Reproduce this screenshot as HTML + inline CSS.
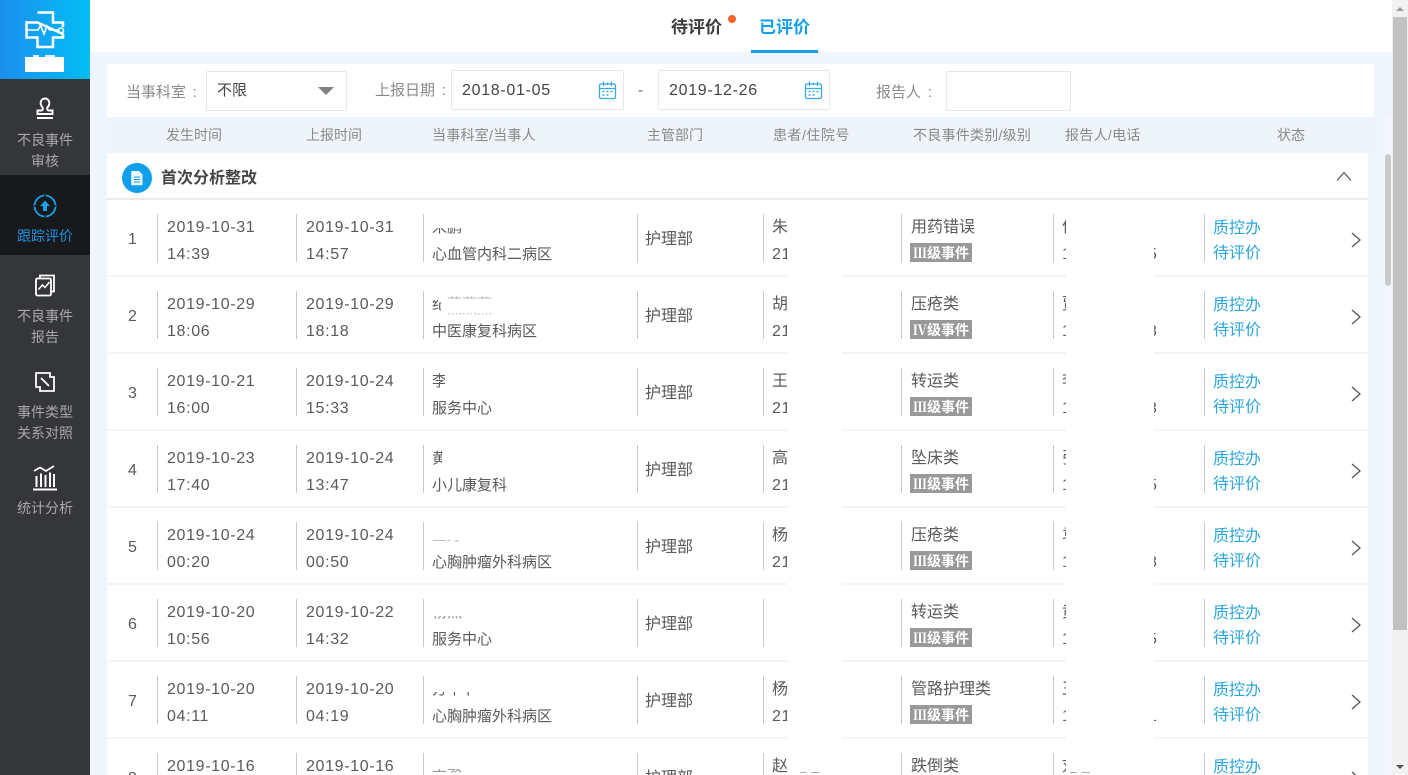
<!DOCTYPE html>
<html><head><meta charset="utf-8"><style>
*{box-sizing:border-box}
html,body{margin:0;padding:0;width:1408px;height:775px;overflow:hidden;background:#f0f4fb;font-family:"Liberation Sans","Noto Sans CJK SC",sans-serif;color:#555}
#wrap{position:relative;width:1408px;height:775px;overflow:hidden;background:#f0f4fb}
.a{position:absolute;white-space:nowrap}
#side{left:0;top:0;width:90px;height:775px;background:#34363a}
.n{position:absolute;left:0;width:90px;text-align:center;font-size:14px;line-height:21px;color:#a8a8a8}
.box{position:absolute;background:#fff;border:1px solid #e4e6ea;border-radius:2px}
.lb{font-size:15px;color:#8a8a8a;line-height:20px;word-spacing:2.500px}
.dt{font-size:16px;color:#444;letter-spacing:.7px;line-height:20px}
.h{font-size:14px;color:#8a8a8a;line-height:20px;top:125px}
.r{position:absolute;left:107px;width:1261px;height:77px;border-bottom:2px solid #f4f4f2;
background:
linear-gradient(#c8c8c8,#c8c8c8) 50px 14px/1px 48px no-repeat,
linear-gradient(#c8c8c8,#c8c8c8) 189px 14px/1px 48px no-repeat,
linear-gradient(#c8c8c8,#c8c8c8) 316px 14px/1px 48px no-repeat,
linear-gradient(#c8c8c8,#c8c8c8) 530px 14px/1px 48px no-repeat,
linear-gradient(#c8c8c8,#c8c8c8) 656px 14px/1px 48px no-repeat,
linear-gradient(#c8c8c8,#c8c8c8) 794px 14px/1px 48px no-repeat,
linear-gradient(#c8c8c8,#c8c8c8) 946px 14px/1px 48px no-repeat,
linear-gradient(#c8c8c8,#c8c8c8) 1097px 14px/1px 48px no-repeat,#fff}
.r span{position:absolute;white-space:nowrap;font-size:16px;line-height:20px;color:#5a5a5a}
.r .d{letter-spacing:.65px}
.r .t1{top:18px}.r .t2{top:45px}.r .m{top:30px}
.r .x1{left:60px}.r .x2{left:199px}.r .x3{left:325px;font-size:15px}.r .x4{left:538px}.r .x5{left:665px}.r .x6{left:804px}.r .x7{left:955px}.r .x8{left:1041px}.r .x9{left:1106px;color:#2ba6dd}
.r .t1.x9{top:19px}.r .t2.x9{top:44px}
.r .no{left:21px;top:30px}
.r .tag{left:803px;top:43px;width:62px;height:19px;background:#999;color:#fff;font-family:"Noto Sans CJK SC",sans-serif;font-size:14px;font-weight:bold;line-height:20px;text-align:center;overflow:hidden}
.r .tag i{font-style:normal;font-family:"Noto Serif CJK SC",serif}
.r svg{position:absolute;left:1243px;top:32px}
.cover{position:absolute;background:#fff;top:210px;height:565px}
</style></head><body><div id="wrap">

<div class="a" style="left:90px;top:0;width:1302px;height:52px;background:#fff"></div>
<div class="a" style="left:671px;top:17px;font-size:17px;font-weight:bold;color:#3c3c3c;line-height:22px">待评价</div>
<div class="a" style="left:728px;top:15px;width:8px;height:8px;border-radius:50%;background:#f5622a"></div>
<div class="a" style="left:759px;top:17px;font-size:17px;font-weight:bold;color:#12a0ea;line-height:22px">已评价</div>
<div class="a" style="left:751px;top:50px;width:67px;height:3px;background:#12a0ea"></div>

<div class="a" style="left:107px;top:64px;width:1267px;height:53px;background:#fff"></div>
<div class="a lb" style="left:126px;top:83px">当事科室 :</div>
<div class="box" style="left:206px;top:71px;width:141px;height:40px"></div>
<div class="a" style="left:217px;top:81px;font-size:15px;color:#444;line-height:20px">不限</div>
<div class="a" style="left:318px;top:87px;width:0;height:0;border-left:8px solid transparent;border-right:8px solid transparent;border-top:8px solid #808080"></div>
<div class="a lb" style="left:375px;top:81px">上报日期 :</div>
<div class="box" style="left:451px;top:70px;width:173px;height:40px"></div>
<div class="a dt" style="left:462px;top:81px">2018-01-05</div>
<svg class="a" style="left:598px;top:80px" width="19" height="20" viewBox="0 0 19 20" fill="none" stroke="#3aa9e0" stroke-width="1.300"><rect x="1.500" y="4" width="16" height="14.500" rx="1.500"/><path d="M1.500 8.500H17.500M5.500 1.500V6M9.500 2.500V5M13.500 1.500V6"/><path d="M4.500 11.500h2M8.500 11.500h2M12.500 11.500h2M4.500 15h2M8.500 15h2" stroke-width="1.600"/></svg>
<div class="a" style="left:638px;top:81px;font-size:15px;color:#666;line-height:20px">-</div>
<div class="box" style="left:658px;top:70px;width:172px;height:40px"></div>
<div class="a dt" style="left:669px;top:81px">2019-12-26</div>
<svg class="a" style="left:804px;top:80px" width="19" height="20" viewBox="0 0 19 20" fill="none" stroke="#3aa9e0" stroke-width="1.300"><rect x="1.500" y="4" width="16" height="14.500" rx="1.500"/><path d="M1.500 8.500H17.500M5.500 1.500V6M9.500 2.500V5M13.500 1.500V6"/><path d="M4.500 11.500h2M8.500 11.500h2M12.500 11.500h2M4.500 15h2M8.500 15h2" stroke-width="1.600"/></svg>
<div class="a lb" style="left:876px;top:83px">报告人 :</div>
<div class="box" style="left:946px;top:71px;width:125px;height:40px"></div>

<div class="a" style="left:107px;top:117px;width:1267px;height:36px;background:#eff3fa"></div>
<div class="a h" style="left:166px">发生时间</div>
<div class="a h" style="left:306px">上报时间</div>
<div class="a h" style="left:432px;letter-spacing:.25px">当事科室/当事人</div>
<div class="a h" style="left:647px">主管部门</div>
<div class="a h" style="left:773px;letter-spacing:.5px">患者/住院号</div>
<div class="a h" style="left:913px;letter-spacing:.25px">不良事件类别/级别</div>
<div class="a h" style="left:1065px;letter-spacing:.3px">报告人/电话</div>
<div class="a h" style="left:1277px">状态</div>

<div class="a" style="left:107px;top:153px;width:1261px;height:47px;background:#fff;border-bottom:2px solid #ecebe8"></div>
<div class="a" style="left:122px;top:163px;width:30px;height:30px;border-radius:50%;background:#12a0ec"></div>
<svg class="a" style="left:130px;top:170px" width="14" height="16" viewBox="0 0 14 16"><path d="M2 1H9L12.500 4.500V14.500a.8.8 0 0 1-.8.8H2a.8.8 0 0 1-.8-.8V1.800A.8.8 0 0 1 2 1Z" fill="#e8f6fd"/><path d="M4 7H10M4 9.500H10M4 12H10" stroke="#12a0ec" stroke-width="1"/></svg>
<div class="a" style="left:161px;top:168px;font-size:16px;font-weight:bold;color:#454545;line-height:22px">首次分析整改</div>
<svg class="a" style="left:1336px;top:170px" width="16" height="12" viewBox="0 0 16 12" fill="none" stroke="#555" stroke-width="1.200"><path d="M1 10.500L8 2.500L15 10.500"/></svg>

<div class="r" style="top:200px"><span class="no">1</span><span class="d t1 x1">2019-10-31</span><span class="d t2 x1">14:39</span><span class="d t1 x2">2019-10-31</span><span class="d t2 x2">14:57</span><span class="t1 x3" style="clip-path:inset(10px 0 0 0)">宋鹏</span><span class="t2 x3">心血管内科二病区</span><span class="m x4">护理部</span><span class="t1 x5">朱</span><span class="d t2 x5">21</span><span class="t1 x6">用药错误</span><span class="tag"><i>Ⅲ</i>级事件</span><span class="t1 x7">何</span><span class="d t2 x7">1</span><span class="d t2 x8">5</span><span class="t1 x9">质控办</span><span class="t2 x9">待评价</span><svg width="12" height="16" viewBox="0 0 12 16" fill="none" stroke="#555" stroke-width="1.300"><path d="M2 1L10 8L2 15"/></svg></div>

<div class="r" style="top:277px"><span class="no">2</span><span class="d t1 x1">2019-10-29</span><span class="d t2 x1">18:06</span><span class="d t1 x2">2019-10-29</span><span class="d t2 x2">18:18</span><span class="t1 x3" style="clip-path:inset(5px 6px 0 0)">纪</span><span class="t1" style="left:340px;font-size:15px;clip-path:inset(0 0 16px 0);color:#bbb">燕燕燕</span><span class="t1" style="left:340px;top:22px;font-size:15px;clip-path:inset(14px 0 0 0);color:#bbb">燕燕燕</span><span class="t2 x3">中医康复科病区</span><span class="m x4">护理部</span><span class="t1 x5">胡</span><span class="d t2 x5">21</span><span class="t1 x6">压疮类</span><span class="tag"><i>Ⅳ</i>级事件</span><span class="t1 x7">贾</span><span class="d t2 x7">1</span><span class="d t2 x8">8</span><span class="t1 x9">质控办</span><span class="t2 x9">待评价</span><svg width="12" height="16" viewBox="0 0 12 16" fill="none" stroke="#555" stroke-width="1.300"><path d="M2 1L10 8L2 15"/></svg></div>

<div class="r" style="top:354px"><span class="no">3</span><span class="d t1 x1">2019-10-21</span><span class="d t2 x1">16:00</span><span class="d t1 x2">2019-10-24</span><span class="d t2 x2">15:33</span><span class="t1 x3" style="width:13px;overflow:hidden">李</span><span class="t2 x3">服务中心</span><span class="m x4">护理部</span><span class="t1 x5">王</span><span class="d t2 x5">21</span><span class="t1 x6">转运类</span><span class="tag"><i>Ⅲ</i>级事件</span><span class="t1 x7">李</span><span class="d t2 x7">1</span><span class="d t2 x8">3</span><span class="t1 x9">质控办</span><span class="t2 x9">待评价</span><svg width="12" height="16" viewBox="0 0 12 16" fill="none" stroke="#555" stroke-width="1.300"><path d="M2 1L10 8L2 15"/></svg></div>

<div class="r" style="top:431px"><span class="no">4</span><span class="d t1 x1">2019-10-23</span><span class="d t2 x1">17:40</span><span class="d t1 x2">2019-10-24</span><span class="d t2 x2">13:47</span><span class="t1 x3" style="width:10px;overflow:hidden">黄</span><span class="t2 x3">小儿康复科</span><span class="m x4">护理部</span><span class="t1 x5">高</span><span class="d t2 x5">21</span><span class="t1 x6">坠床类</span><span class="tag"><i>Ⅲ</i>级事件</span><span class="t1 x7">张</span><span class="d t2 x7">1</span><span class="d t2 x8">5</span><span class="t1 x9">质控办</span><span class="t2 x9">待评价</span><svg width="12" height="16" viewBox="0 0 12 16" fill="none" stroke="#555" stroke-width="1.300"><path d="M2 1L10 8L2 15"/></svg></div>

<div class="r" style="top:508px"><span class="no">5</span><span class="d t1 x1">2019-10-24</span><span class="d t2 x1">00:20</span><span class="d t1 x2">2019-10-24</span><span class="d t2 x2">00:50</span><span class="t1 x3" style="color:#bbb;clip-path:inset(14px 0 3px 0)">王芳</span><span class="t2 x3">心胸肿瘤外科病区</span><span class="m x4">护理部</span><span class="t1 x5">杨</span><span class="d t2 x5">21</span><span class="t1 x6">压疮类</span><span class="tag"><i>Ⅲ</i>级事件</span><span class="t1 x7">袁</span><span class="d t2 x7">1</span><span class="d t2 x8">8</span><span class="t1 x9">质控办</span><span class="t2 x9">待评价</span><svg width="12" height="16" viewBox="0 0 12 16" fill="none" stroke="#555" stroke-width="1.300"><path d="M2 1L10 8L2 15"/></svg></div>

<div class="r" style="top:585px"><span class="no">6</span><span class="d t1 x1">2019-10-20</span><span class="d t2 x1">10:56</span><span class="d t1 x2">2019-10-22</span><span class="d t2 x2">14:32</span><span class="t1 x3" style="color:#888;clip-path:inset(13px 0 3px 0)">杨燕</span><span class="t2 x3">服务中心</span><span class="m x4">护理部</span><span class="t1 x6">转运类</span><span class="tag"><i>Ⅲ</i>级事件</span><span class="t1 x7">黄</span><span class="d t2 x7">1</span><span class="d t2 x8">5</span><span class="t1 x9">质控办</span><span class="t2 x9">待评价</span><svg width="12" height="16" viewBox="0 0 12 16" fill="none" stroke="#555" stroke-width="1.300"><path d="M2 1L10 8L2 15"/></svg></div>

<div class="r" style="top:662px"><span class="no">7</span><span class="d t1 x1">2019-10-20</span><span class="d t2 x1">04:11</span><span class="d t1 x2">2019-10-20</span><span class="d t2 x2">04:19</span><span class="t1 x3" style="clip-path:inset(12px 0 2px 0)">方苹卜</span><span class="t2 x3">心胸肿瘤外科病区</span><span class="m x4">护理部</span><span class="t1 x5">杨</span><span class="d t2 x5">21</span><span class="t1 x6">管路护理类</span><span class="tag"><i>Ⅲ</i>级事件</span><span class="t1 x7">王</span><span class="d t2 x7">1</span><span class="d t2 x8">1</span><span class="t1 x9">质控办</span><span class="t2 x9">待评价</span><svg width="12" height="16" viewBox="0 0 12 16" fill="none" stroke="#555" stroke-width="1.300"><path d="M2 1L10 8L2 15"/></svg></div>

<div class="r" style="top:739px;height:36px;overflow:hidden;border-bottom:0"><span class="no">8</span><span class="d t1 x1">2019-10-16</span><span class="d t1 x2">2019-10-16</span><span class="t1 x3" style="color:#999;clip-path:inset(12px 0 0 0)">王敏</span><span class="m x4">护理部</span><span class="t1 x5">赵</span><span class="t1 x6">跌倒类</span><span class="t1 x7">刘</span><span class="t1 x9">质控办</span><svg width="12" height="16" viewBox="0 0 12 16" fill="none" stroke="#555" stroke-width="1.300"><path d="M2 1L10 8L2 15"/></svg></div>

<div class="cover" style="left:787px;width:55px"></div>
<div class="cover" style="left:1066px;width:88px"></div>
<div class="a" style="left:800px;top:772px;width:6px;height:1px;background:#aaa"></div>
<div class="a" style="left:811px;top:772px;width:8px;height:1px;background:#aaa"></div>
<div class="a" style="left:1070px;top:772px;width:7px;height:1px;background:#aaa"></div>
<div class="a" style="left:1082px;top:772px;width:8px;height:1px;background:#aaa"></div>

<div class="a" style="left:1384px;top:117px;width:8px;height:658px;background:#f3f6fb"></div>
<div class="a" style="left:1385px;top:154px;width:6px;height:132px;border-radius:3px;background:#c9c9c9"></div>
<div class="a" style="left:1392px;top:0;width:16px;height:775px;background:#f1f1f1"></div>
<div class="a" style="left:1393px;top:17px;width:14px;height:613px;background:#c1c1c1"></div>
<div class="a" style="left:1396px;top:7px;width:0;height:0;border-left:4px solid transparent;border-right:4px solid transparent;border-bottom:4px solid #a0a0a0"></div>
<div class="a" style="left:1396px;top:765px;width:0;height:0;border-left:4px solid transparent;border-right:4px solid transparent;border-top:4px solid #505050"></div>

<div class="a" id="side"></div>
<div class="a" style="left:0;top:0;width:90px;height:79px;background:linear-gradient(90deg,#1b8fee,#03bdf5)"></div>
<svg class="a" style="left:25px;top:11px" width="41" height="38" viewBox="0 0 41 38" fill="none" stroke="#fff" stroke-width="2.500"><path d="M12.500 1.500H28V11.500H38V16M38 23V26.500H28V36H12.500V26.500H1.500V11.500H12.500Z"/><path d="M2.500 19H13L15.500 14.500L19 23L22 15L24.500 19H33" stroke-width="1.600"/><circle cx="36" cy="19.500" r="2.500" stroke-width="1.600"/></svg>
<div class="a" style="left:33px;top:55px;width:6px;height:2px;background:#dff3fd"></div>
<div class="a" style="left:45px;top:55px;width:10px;height:2px;background:#dff3fd"></div>
<div class="a" style="left:25px;top:57px;width:39px;height:15px;background:#fff"></div>

<svg class="a" style="left:36px;top:97px" width="18" height="24" viewBox="0 0 18 24" fill="none" stroke="#fff" stroke-width="2"><path d="M5.500 13.500C7.500 13 7 10.500 5.500 9C3.500 5.500 5.500 1.500 9 1.500S14.500 5.500 12.500 9C11 10.500 10.500 13 12.500 13.500H16.500V17H1.500V13.500Z"/><path d="M1 21H17" stroke-width="2"/></svg>
<div class="n" style="top:130px">不良事件<br>审核</div>

<div class="a" style="left:0;top:175px;width:90px;height:80px;background:#17191d"></div>
<svg class="a" style="left:33px;top:194px" width="24" height="24" viewBox="0 0 24 24" fill="none" stroke="#17a3e6" stroke-width="1.800"><circle cx="12" cy="12" r="10.500"/><path d="M12 1V4M12 20V23M1 12H4M20 12H23" stroke="#17191d" stroke-width="1.500"/><path d="M12 6.500L17 12H14V17H10V12H7Z" fill="#17a3e6" stroke="none"/></svg>
<div class="n" style="top:226px;color:#1e94dc">跟踪评价</div>

<svg class="a" style="left:34px;top:273px" width="22" height="24" viewBox="0 0 22 24" fill="none" stroke="#fff" stroke-width="1.800"><path d="M6 5V2.500H20V18.500H16.500"/><rect x="2" y="5.500" width="15" height="17" rx="1.500"/><path d="M4.500 16.500L8.500 12L11 14.500L15.500 9" stroke-width="1.500"/></svg>
<div class="n" style="top:306px">不良事件<br>报告</div>

<svg class="a" style="left:35px;top:372px" width="20" height="20" viewBox="0 0 20 20" fill="none" stroke="#fff" stroke-width="1.800"><path d="M1 1H15V5H19V19H5V15H1Z"/><path d="M6 6L14 14"/></svg>
<div class="n" style="top:402px">事件类型<br>关系对照</div>

<svg class="a" style="left:32px;top:464px" width="26" height="27" viewBox="0 0 26 27" fill="none" stroke="#fff" stroke-width="1.700"><path d="M2 7L8 3.500L14 7L22 2" stroke-width="1.800"/><path d="M4.500 23V12M9 23V9.500M13.500 23V11M18 23V8.500M22 23V10" stroke-width="2"/><path d="M1 25.500H25" stroke-width="2"/></svg>
<div class="n" style="top:498px">统计分析</div>
</div></body></html>
